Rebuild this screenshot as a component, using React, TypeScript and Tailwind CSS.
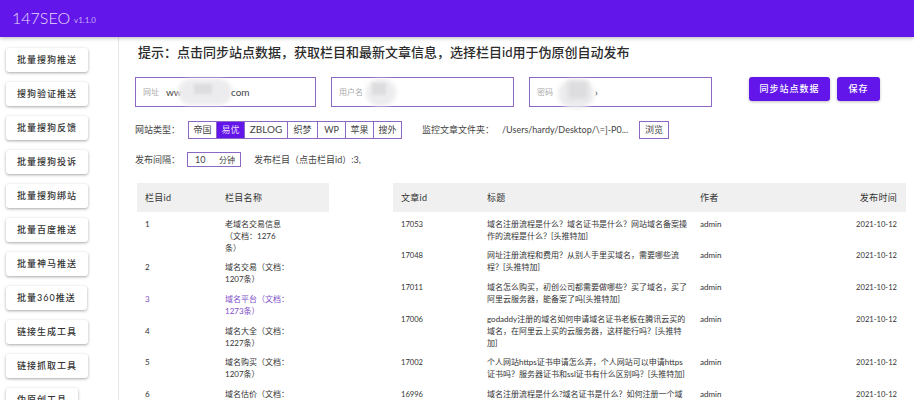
import React from 'react';

const sideItems = [
  '批量搜狗推送',
  '搜狗验证推送',
  '批量搜狗反馈',
  '批量搜狗投诉',
  '批量搜狗绑站',
  '批量百度推送',
  '批量神马推送',
  '批量360推送',
  '链接生成工具',
  '链接抓取工具',
  '伪原创工具',
];

const siteTypes = [
  { name: '帝国', width: 'w-[28px]' },
  { name: '易优', width: 'w-[28px]' },
  { name: 'ZBLOG', width: 'w-[43px] text-[10px]' },
  { name: '织梦', width: 'w-[30px]' },
  { name: 'WP', width: 'w-[28px]' },
  { name: '苹果', width: 'w-[28px]' },
  { name: '搜外', width: 'w-[27px]' },
];

const columns = [
  { id: 1, lines: ['老域名交易信息', '（文档：1276', '条）'] },
  { id: 2, lines: ['域名交易（文档：', '1207条）'] },
  { id: 3, lines: ['域名平台（文档：', '1273条）'], active: true },
  { id: 4, lines: ['域名大全（文档：', '1227条）'] },
  { id: 5, lines: ['域名购买（文档：', '1207条）'] },
  { id: 6, lines: ['域名估价（文档：', '1207条）'] },
];

const articles = [
  { id: 17053, lines: ['域名注册流程是什么？域名证书是什么？网站域名备案操', '作的流程是什么？[头推特加]'] },
  { id: 17048, lines: ['网址注册流程和费用？从别人手里买域名，需要哪些流', '程？[头推特加]'] },
  { id: 17011, lines: ['域名怎么购买，初创公司都需要做哪些？买了域名，买了', '阿里云服务器，能备案了吗[头推特加]'] },
  { id: 17006, lines: ['godaddy注册的域名如何申请域名证书老板在腾讯云买的', '域名，在阿里云上买的云服务器，这样能行吗？[头推特', '加]'] },
  { id: 17002, lines: ['个人网站https证书申请怎么弄，个人网站可以申请https', '证书吗？服务器证书和ssl证书有什么区别吗？[头推特加]'] },
  { id: 16996, lines: ['域名注册流程是什么?域名证书是什么？如何注册一个域', '名？[头推特加]'] },
];

function Blur({ className }: { className: string }) {
  return <div className={`absolute rounded-full bg-[#ececee] blur-[2px] ${className}`} />;
}

function Field({ label, value, width, children }: { label: string; value?: string; width: string; children?: React.ReactNode }) {
  return (
    <div className={`relative flex h-[30px] items-center border-[1.5px] border-[#8a68c4] pl-[7px] ${width}`}>
      <span className="text-[8px] text-[#aaaaaa]">{label}</span>
      {value && <span className="ml-[7px] text-[10px] text-[#444444]">{value}</span>}
      {children}
    </div>
  );
}

export default function App() {
  return (
    <div className="h-[400px] w-[914px] overflow-hidden bg-white font-['Lato','Noto_Sans_CJK_SC',sans-serif] text-[#333333]">
      {/* Header */}
      <header className="relative z-10 flex h-[37px] items-center bg-[#6216ea] pb-[1px] pl-[12px] shadow-[0_1px_4px_rgba(0,0,0,0.3)]">
        <span className="text-[16px] font-light leading-none text-[#e8dcfb]">147SEO</span>
        <span className="ml-[4px] mt-[4px] text-[8px] leading-none text-[#c7aef5]">v1.1.0</span>
      </header>

      <div className="flex h-[363px]">
        {/* Sidebar */}
        <aside className="flex w-[119px] shrink-0 flex-col items-start gap-[10px] border-r border-[#e6e6e6] pl-[6px] pt-[11px]">
          {sideItems.map((item) => (
            <button
              key={item}
              className="flex h-[24px] shrink-0 items-center whitespace-nowrap rounded-[3px] bg-white px-[11px] text-[9px] font-medium tracking-[1px] text-[#333333] shadow-[0_1px_3px_rgba(0,0,0,0.35)]"
            >
              {item}
            </button>
          ))}
        </aside>

        {/* Main */}
        <main className="min-w-0 flex-1 pl-[16px]">
          <h1 className="ml-[3px] mt-[6px] text-[13px] font-medium leading-[18px] text-[#2b2b2b]">
            提示：点击同步站点数据，获取栏目和最新文章信息，选择栏目id用于伪原创自动发布
          </h1>

          <div className="mt-[16px] flex items-start">
            <Field label="网址" value="ww" width="w-[181px]">
              <Blur className="left-[42px] top-[1px] h-[26px] w-[54px]" />
              <div className="absolute left-[58px] top-[6px] h-[10px] w-[18px] bg-[#dddddf] blur-[1px]" />
              <span className="absolute left-[95px] text-[10px] text-[#444444]">com</span>
            </Field>
            <Field label="用户名" width="ml-[15px] w-[183px]">
              <Blur className="left-[34px] top-[1px] h-[27px] w-[30px]" />
              <div className="absolute left-[40px] top-[5px] h-[12px] w-[14px] bg-[#dddddf] blur-[1px]" />
            </Field>
            <Field label="密码" width="ml-[15px] w-[183px]">
              <Blur className="left-[28px] top-[2px] h-[28px] w-[36px]" />
              <div className="absolute left-[38px] top-[3px] h-[18px] w-[20px] bg-[#dddddf] blur-[2px]" />
              <span className="absolute left-[65px] text-[10px] text-[#444444]">›</span>
            </Field>
            <button className="ml-[37px] flex h-[24px] w-[81px] items-center justify-center rounded-[3px] bg-[#6216ea] text-[9px] font-medium tracking-[1px] text-white shadow-[0_1px_3px_rgba(0,0,0,0.25)]">
              同步站点数据
            </button>
            <button className="ml-[7px] flex h-[24px] w-[43px] items-center justify-center rounded-[3px] bg-[#6216ea] text-[9px] font-medium tracking-[1px] text-white shadow-[0_1px_3px_rgba(0,0,0,0.25)]">
              保存
            </button>
          </div>

          <div className="mt-[13px] flex h-[19px] items-center text-[9px] text-[#444444]">
            <span className="w-[53px]">网站类型：</span>
            <div className="flex h-[18px] border border-[#8a68c4]">
              {siteTypes.map((t) => (
                <span
                  key={t.name}
                  className={`flex items-center justify-center border-r border-[#8a68c4] last:border-r-0 ${t.width} ${t.name === '易优' ? 'bg-[#6216ea] text-[#e8dcfb]' : ''}`}
                >
                  {t.name}
                </span>
              ))}
            </div>
            <span className="ml-[20px]">监控文章文件夹：</span>
            <span className="ml-[8px] w-[130px] whitespace-nowrap">/Users/hardy/Desktop/\=]-P0...</span>
            <span className="ml-[7px] flex h-[18px] w-[30px] items-center justify-center border border-[#8a68c4]">浏览</span>
          </div>

          <div className="mt-[13px] flex h-[15px] items-center text-[9px] text-[#444444]">
            <span className="w-[52px]">发布间隔：</span>
            <div className="flex h-[15px] w-[54px] items-center justify-between border border-[#8a68c4] pl-[7px] pr-[5px]">
              <span>10</span>
              <span className="text-[8px]">分钟</span>
            </div>
            <span className="ml-[13px]">发布栏目（点击栏目id）:3,</span>
          </div>

          <div className="ml-[2px] mt-[16px] flex items-start">
            {/* Column table */}
            <section className="w-[192px] text-[8px] leading-[12px]">
              <div className="flex h-[29px] items-center bg-[#f0f0f0] text-[9px] tracking-[0.3px]">
                <span className="w-[88px] pl-[8px]">栏目id</span>
                <span>栏目名称</span>
              </div>
              <div className="pt-[2px]">
                {columns.map((c) => (
                  <div key={c.id} className={`flex py-[3.8px] ${c.active ? 'text-[#7e4fc9]' : ''}`}>
                    <span className="w-[88px] pl-[8px]">{c.id}</span>
                    <span className="whitespace-nowrap">
                      {c.lines.map((l) => (
                        <React.Fragment key={l}>
                          {l}
                          <br />
                        </React.Fragment>
                      ))}
                    </span>
                  </div>
                ))}
              </div>
            </section>

            {/* Article table */}
            <section className="ml-[64px] w-[513px] text-[8px] leading-[12px]">
              <div className="flex h-[29px] items-center bg-[#f0f0f0] text-[9px] tracking-[0.3px]">
                <span className="w-[94px] pl-[8px]">文章id</span>
                <span className="w-[213px]">标题</span>
                <span>作者</span>
                <span className="ml-auto pr-[9px]">发布时间</span>
              </div>
              <div className="pt-[2px]">
                {articles.map((a) => (
                  <div key={a.id} className="flex py-[3.8px]">
                    <span className="w-[94px] pl-[8px] text-[7.6px]">{a.id}</span>
                    <span className="w-[213px] whitespace-nowrap">
                      {a.lines.map((l) => (
                        <React.Fragment key={l}>
                          {l}
                          <br />
                        </React.Fragment>
                      ))}
                    </span>
                    <span>admin</span>
                    <span className="ml-auto pr-[9px] text-[7.6px]">2021-10-12</span>
                  </div>
                ))}
              </div>
            </section>
          </div>
        </main>
      </div>
    </div>
  );
}
